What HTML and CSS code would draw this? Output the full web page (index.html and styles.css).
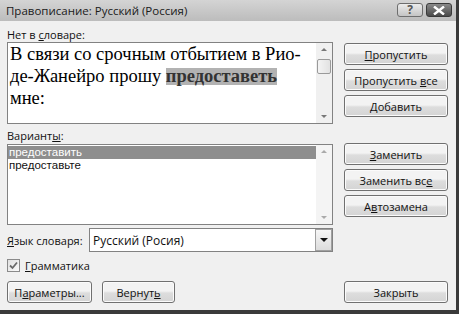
FILE: index.html
```html
<!DOCTYPE html>
<html lang="ru">
<head>
    <meta charset="UTF-8">
    <title>Правописание: Русский (Россия)</title>
    <link rel="stylesheet" href="styles.css">
</head>
<body>
    <div class="dialog">
        <div class="titlebar">
            <span class="title">Правописание: Русский (Россия)</span>
            <div class="caption-btns">
                <span class="cap-btn help">?</span>
                <span class="cap-btn close">
                    <svg width="12" height="9" viewBox="0 0 12 9"><path d="M1 0.5 L11 8.5 M11 0.5 L1 8.5" stroke="#fff" stroke-width="2.4"/></svg>
                </span>
            </div>
        </div>

        <div class="body">
            <div class="left">
                <div class="label">Нет в <u>с</u>ловаре:</div>
                <div class="textbox">
                    <div class="sentence">
                        <span>В связи со срочным отбытием в Рио-</span><br>
                        <span>де-Жанейро прошу</span> <b class="err">предоставеть</b><br>
                        <span>мне:</span>
                    </div>
                    <div class="vscroll">
                        <span class="arrow up"></span>
                        <span class="thumb"></span>
                        <span class="arrow down"></span>
                    </div>
                </div>

                <div class="label second">Вариант<u>ы</u>:</div>
                <div class="listbox">
                    <ul class="items">
                        <li class="selected">предоставить</li>
                        <li>предоставьте</li>
                    </ul>
                    <div class="vscroll light">
                        <span class="arrow up"></span>
                        <span class="arrow down"></span>
                    </div>
                </div>

                <div class="lang-row">
                    <span class="lang-label"><u>Я</u>зык словаря:</span>
                    <div class="select">
                        <span class="select-text">Русский (Росия)</span>
                        <span class="select-btn"><span class="tri"></span></span>
                    </div>
                </div>

                <label class="check-row">
                    <span class="checkbox">
                        <svg width="9" height="9" viewBox="0 0 9 9"><path d="M1 4.5 L3.5 7 L8 1.5" stroke="#6a6a6a" stroke-width="1.8" fill="none"/></svg>
                    </span>
                    <span><u>Г</u>рамматика</span>
                </label>
            </div>

            <div class="right">
                <button class="btn"><u>П</u>ропустить</button>
                <button class="btn">Пропустить <u>в</u>се</button>
                <button class="btn"><u>Д</u>обавить</button>
                <button class="btn group2"><u>З</u>аменить</button>
                <button class="btn">Заменить вс<u>е</u></button>
                <button class="btn">А<u>в</u>тозамена</button>
            </div>
        </div>

        <div class="footer">
            <button class="btn params">П<u>а</u>раметры...</button>
            <button class="btn revert">Вернут<u>ь</u></button>
            <button class="btn close-btn">Закрыть</button>
        </div>
    </div>
</body>
</html>
```

FILE: styles.css
```css
/* General */
body {
    margin: 0;
    padding: 0;
    background: #f0f0f0;
    font-family: 'Open Sans', 'DejaVu Sans', sans-serif;
    font-size: 11px;
    color: #111;
}

u {
    text-decoration: underline;
    text-underline-offset: 1px;
}

.dialog {
    width: 456px;
    height: 310px;
    background: #f0f0f0;
    border-right: 3px solid #3a3a3a;
    border-bottom: 4px solid #3a3a3a;
    display: flex;
    flex-direction: column;
}

/* Title bar */
.titlebar {
    height: 21px;
    background: linear-gradient(#d4d4d4, #bcbcbc);
    display: flex;
    align-items: center;
    justify-content: space-between;
    padding-left: 6px;
}

.title {
    font-size: 11.5px;
    color: #1a1a1a;
}

.caption-btns {
    display: flex;
    gap: 3px;
    margin-right: 4px;
    margin-top: 3px;
    align-self: flex-start;
}

.cap-btn {
    width: 26px;
    height: 14px;
    border: 1px solid #6e6e6e;
    border-radius: 3px;
    box-sizing: border-box;
    display: flex;
    align-items: center;
    justify-content: center;
}

.help {
    background: linear-gradient(#ececec, #c4c4c4);
    color: #555;
    font-size: 12px;
    font-weight: bold;
    line-height: 1;
}

.close {
    background: linear-gradient(#8a8a8a, #4a4a4a);
    border-color: #3a3a3a;
}

/* Body */
.body {
    display: flex;
    padding: 6px 0 0 7px;
    gap: 11px;
}

.left {
    width: 326px;
}

.label {
    height: 15px;
    line-height: 15px;
}

.label.second {
    margin-top: 4px;
    height: 16px;
    line-height: 16px;
}

.textbox {
    height: 82px;
    box-sizing: border-box;
    border: 1px solid #828282;
    background: #fff;
    display: flex;
}

.sentence {
    flex: 1;
    padding: 0 2px;
    font-family: 'Liberation Serif', serif;
    font-size: 18.5px;
    line-height: 22px;
    color: #000;
}

.err {
    display: inline-block;
    line-height: 17px;
    background: #b2b2b2;
    color: #333;
}

.vscroll {
    width: 16px;
    background: #f0f0f0;
    display: flex;
    flex-direction: column;
    align-items: center;
}

.vscroll.light {
    background: #f4f4f4;
}

.arrow {
    width: 0;
    height: 0;
    border-left: 3px solid transparent;
    border-right: 3px solid transparent;
}

.arrow.up {
    margin-top: 5px;
    border-bottom: 3px solid #777;
}

.arrow.down {
    margin-top: auto;
    margin-bottom: 5px;
    border-top: 3px solid #777;
}

.light .arrow.up {
    border-bottom-color: #aaa;
}

.light .arrow.down {
    border-top-color: #aaa;
}

.thumb {
    width: 14px;
    height: 15px;
    margin-top: 8px;
    box-sizing: border-box;
    border: 1px solid #9a9a9a;
    border-radius: 2px;
    background: linear-gradient(90deg, #f4f4f4, #e2e2e2);
}

.listbox {
    height: 81px;
    box-sizing: border-box;
    border: 1px solid #828282;
    background: #fff;
    display: flex;
}

.items {
    flex: 1;
    list-style: none;
    margin: 0;
    padding: 1px 0 0 0;
}

.items li {
    height: 13px;
    line-height: 13px;
    padding-left: 1px;
    font-family: 'Liberation Sans', sans-serif;
    font-size: 11.5px;
    overflow: hidden;
}

.items li.selected {
    background: #8e8e8e;
    color: #fff;
}

/* Language */
.lang-row {
    display: flex;
    align-items: center;
    margin-top: 3px;
    height: 24px;
}

.lang-label {
    width: 82px;
}

.select {
    flex: 1;
    height: 24px;
    box-sizing: border-box;
    border: 1px solid #828282;
    background: #fff;
    display: flex;
    align-items: center;
}

.select-text {
    flex: 1;
    padding-left: 3px;
    font-size: 12px;
}

.select-btn {
    width: 17px;
    height: 22px;
    box-sizing: border-box;
    border: 1px solid #a0a0a0;
    background: linear-gradient(#f6f6f6, #dcdcdc);
    display: flex;
    align-items: center;
    justify-content: center;
}

.tri {
    width: 0;
    height: 0;
    border-left: 4px solid transparent;
    border-right: 4px solid transparent;
    border-top: 4px solid #111;
}

.check-row {
    display: flex;
    align-items: center;
    gap: 5px;
    margin-top: 6px;
    height: 14px;
}

.checkbox {
    width: 13px;
    height: 13px;
    box-sizing: border-box;
    border: 1px solid #8a8a8a;
    background: linear-gradient(135deg, #e0e0e0, #fafafa);
    display: flex;
    align-items: center;
    justify-content: center;
}

/* Buttons */
.right {
    width: 104px;
    display: flex;
    flex-direction: column;
    gap: 4px;
    padding-top: 16px;
}

.btn {
    height: 22px;
    box-sizing: border-box;
    border: 1px solid #707070;
    border-radius: 3px;
    background: linear-gradient(#f3f3f3 45%, #dddddd 55%, #d4d4d4);
    font-family: inherit;
    font-size: 11px;
    color: #111;
    padding: 0;
    box-shadow: inset 0 0 0 1px #fbfbfb;
}

.btn.group2 {
    margin-top: 22px;
}

.footer {
    display: flex;
    padding: 9px 0 0 7px;
    gap: 10px;
}

.params {
    width: 85px;
}

.revert {
    width: 73px;
}

.close-btn {
    width: 104px;
    margin-left: auto;
    margin-right: 8px;
}
```
